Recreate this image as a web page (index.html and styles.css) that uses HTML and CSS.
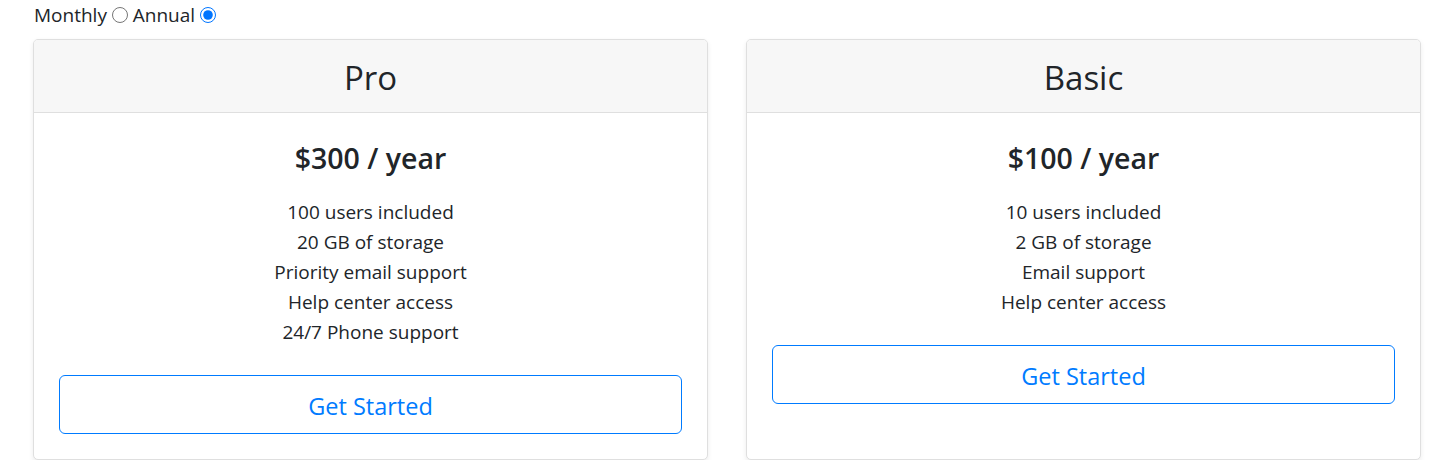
FILE: index.html
```html
<!DOCTYPE html>
<html lang="en">
<head>
<meta charset="utf-8">
<title>Pricing</title>
<link rel="stylesheet" href="styles.css">
</head>
<body>
<div class="page">
  <div class="toggle">Monthly <input type="radio" name="period" class="radio"> Annual <input type="radio" name="period" class="radio" checked></div>
  <div class="deck">
    <div class="card">
      <div class="card-header"><h3 class="plan">Pro</h3></div>
      <div class="card-body">
        <h1 class="price">$300 / year</h1>
        <ul class="features">
          <li>100 users included</li>
          <li>20 GB of storage</li>
          <li>Priority email support</li>
          <li>Help center access</li>
          <li>24/7 Phone support</li>
        </ul>
        <button class="btn" type="button">Get Started</button>
      </div>
    </div>
    <div class="card">
      <div class="card-header"><h3 class="plan">Basic</h3></div>
      <div class="card-body">
        <h1 class="price">$100 / year</h1>
        <ul class="features">
          <li>10 users included</li>
          <li>2 GB of storage</li>
          <li>Email support</li>
          <li>Help center access</li>
        </ul>
        <button class="btn" type="button">Get Started</button>
      </div>
    </div>
  </div>
</div>
</body>
</html>
```
FILE: styles.css
```css
* { box-sizing: border-box; }
html, body { margin: 0; padding: 0; background: #fff; }
body {
  font-family: "Open Sans", "Noto Sans", sans-serif;
  font-size: 19px;
  color: #212529;
}
.page {
  padding: 0 32px 0 33px;
}
.toggle {
  height: 30px;
  line-height: 30px;
  padding-left: 1px;
}
.radio {
  width: 16px;
  height: 16px;
  margin: 0;
  vertical-align: -1px;
}
.deck {
  margin-top: 9px;
  display: flex;
  gap: 38px;
  align-items: stretch;
}
.card {
  flex: 1 1 0;
  border: 1px solid #dfdfdf;
  border-radius: 5px;
  background: #fff;
  box-shadow: 0 2.5px 5px rgba(0,0,0,0.075);
  display: flex;
  flex-direction: column;
  overflow: hidden;
}
.card-header {
  background: #f7f7f7;
  border-bottom: 1px solid #dfdfdf;
  padding: 17px 25px 13px;
  text-align: center;
}
.plan {
  margin: 0;
  font-size: 33px;
  line-height: 42px;
  font-weight: 400;
}
.card-body {
  padding: 25px;
  text-align: center;
  flex: 1;
}
.price {
  margin: 0 0 21px;
  padding-top: 2px;
  font-size: 28.5px;
  line-height: 36px;
  font-weight: 600;
}
.features {
  list-style: none;
  margin: 0 0 28px;
  padding: 0;
  line-height: 30px;
}
.btn {
  display: block;
  width: 100%;
  font-family: inherit;
  font-size: 23.5px;
  line-height: 37px;
  padding: 12px 20px 8px;
  color: #007bff;
  background: transparent;
  border: 1px solid #007bff;
  border-radius: 6px;
  cursor: pointer;
}
```
